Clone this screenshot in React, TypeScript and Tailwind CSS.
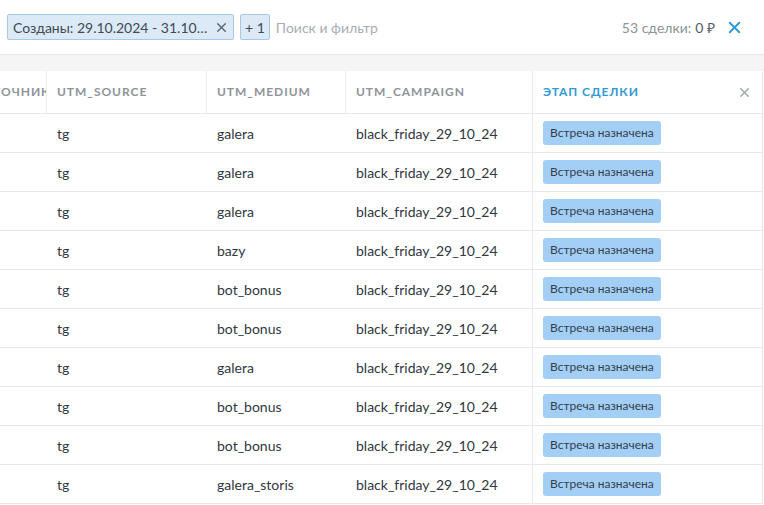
import { X } from "lucide-react";

const rows = [
  "galera",
  "galera",
  "galera",
  "bazy",
  "bot_bonus",
  "bot_bonus",
  "galera",
  "bot_bonus",
  "bot_bonus",
  "galera_storis",
];

export default function App() {
  return (
    <div className="w-[764px] h-[505px] overflow-hidden bg-white text-[#2f3740] font-['Lato','Open_Sans',sans-serif]">
      {/* filter bar */}
      <div className="h-[55px] flex items-center pl-[7px] pr-[20px] border-b border-[#e6e6e6]">
        <div className="flex items-center h-[26px] w-[227px] pl-[5px] pr-[4px] bg-[#dce9f6] border border-[#a9c7e6] rounded-[2px] text-[14px] text-[#3e4a55]">
          <span className="flex-1 truncate">Созданы: 29.10.2024 - 31.10.2024</span>
          <X className="w-[15px] h-[15px] ml-[6px] text-[#5d6873]" strokeWidth={2.4} />
        </div>
        <div className="ml-[6px] h-[26px] px-[4px] flex items-center bg-[#dce9f6] border border-[#a9c7e6] rounded-[2px] text-[14px] text-[#3e4a55]">
          + 1
        </div>
        <span className="ml-[6px] text-[14px] text-[#a9adb1]">Поиск и фильтр</span>
        <div className="ml-auto flex items-center text-[14px]">
          <span className="text-[#8c9298]">53 сделки:</span>
          <span className="ml-[4px] text-[#555d65]">0 ₽</span>
          <X className="ml-[10px] w-[19px] h-[19px] text-[#2d9ad6]" strokeWidth={2.4} />
        </div>
      </div>
      <div className="h-[16px] bg-[#f5f5f5]" />

      {/* table */}
      <div className="flex text-[14px]">
        <div className="w-[762px] shrink-0">
          <div className="flex h-[43px] border-b border-[#e8e8e8] text-[12px] font-bold tracking-[0.08em] text-[#8e9499]">
            <div className="w-[47px] overflow-hidden border-r border-[#ececec] flex items-center">
              <span className="-ml-[26px] whitespace-nowrap">ИСТОЧНИК</span>
            </div>
            <div className="w-[160px] border-r border-[#ececec] flex items-center pl-[10px]">UTM_SOURCE</div>
            <div className="w-[139px] border-r border-[#ececec] flex items-center pl-[10px]">UTM_MEDIUM</div>
            <div className="w-[187px] border-r border-[#e8e8e8] flex items-center pl-[10px]">UTM_CAMPAIGN</div>
            <div className="flex-1 flex items-center pl-[10px] pr-[10px] text-[#2f9bd6]">
              <span>ЭТАП СДЕЛКИ</span>
              <X className="ml-auto w-[15px] h-[15px] text-[#9aa0a5]" strokeWidth={2} />
            </div>
          </div>
          {rows.map((m, i) => (
            <div key={i} className="flex h-[39px] border-b border-[#e8e8e8]">
              <div className="w-[47px]" />
              <div className="w-[160px] flex items-center pl-[10px]">tg</div>
              <div className="w-[139px] flex items-center pl-[10px]">{m}</div>
              <div className="w-[187px] border-r border-[#e8e8e8] flex items-center pl-[10px]">black_friday_29_10_24</div>
              <div className="flex-1 flex items-center pl-[10px]">
                <span className="h-[24px] px-[7px] flex items-center rounded-[3px] bg-[#a3cff7] text-[12px] text-[#34404c]">
                  Встреча назначена
                </span>
              </div>
            </div>
          ))}
        </div>
        <div className="w-px bg-[#e8e8e8]" />
      </div>
    </div>
  );
}
